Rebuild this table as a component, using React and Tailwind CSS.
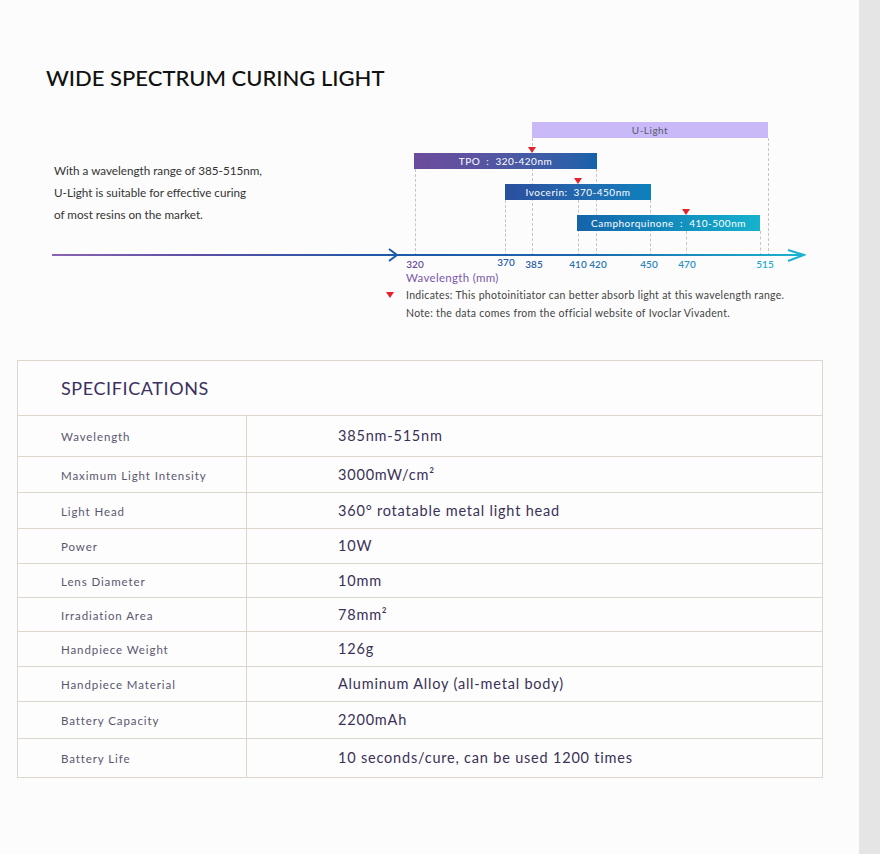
import React from "react";

const bars = [
  { label: "TPO  :  320-420nm", left: 414, top: 53, width: 183, cls: "bg-gradient-to-r from-[#6d4b9c] to-[#1262aa]" },
  { label: "Ivocerin:  370-450nm", left: 505, top: 84, width: 146, cls: "bg-gradient-to-r from-[#2a4f9e] to-[#0d80bd]" },
  { label: "Camphorquinone  :  410-500nm", left: 577, top: 115, width: 183, cls: "bg-gradient-to-r from-[#1563aa] to-[#16b2cd]" },
];

const markers = [532, 578, 686];
const markerTops = [47, 78, 109];

const dashes = [
  { x: 415, top: 69 },
  { x: 505, top: 100 },
  { x: 532, top: 38 },
  { x: 578, top: 100 },
  { x: 596, top: 69 },
  { x: 650, top: 100 },
  { x: 686, top: 131 },
  { x: 760, top: 131 },
  { x: 768, top: 38 },
];

const ticks = [
  { v: "320", x: 415, c: "#6a4c9c", top: 159 },
  { v: "370", x: 506, c: "#2d5da8", top: 157 },
  { v: "385", x: 534, c: "#2b5ea8", top: 159 },
  { v: "410", x: 578, c: "#2a6fb0", top: 159 },
  { v: "420", x: 598, c: "#2a74b3", top: 159 },
  { v: "450", x: 649, c: "#2a84bf", top: 159 },
  { v: "470", x: 687, c: "#2a90c4", top: 159 },
  { v: "515", x: 765, c: "#21a9cc", top: 159 },
];

const specs = [
  ["Wavelength", "385nm-515nm", 41],
  ["Maximum Light Intensity", "3000mW/cm²", 36],
  ["Light Head", "360° rotatable metal light head", 36],
  ["Power", "10W", 35],
  ["Lens Diameter", "10mm", 34],
  ["Irradiation Area", "78mm²", 34],
  ["Handpiece Weight", "126g", 35],
  ["Handpiece Material", "Aluminum Alloy (all-metal body)", 35],
  ["Battery Capacity", "2200mAh", 37],
  ["Battery Life", "10 seconds/cure, can be used 1200 times", 38],
];

function Triangle({ className = "", style }) {
  return (
    <div
      className={`w-0 h-0 border-l-[4px] border-r-[4px] border-t-[6px] border-l-transparent border-r-transparent border-t-[#e5212b] ${className}`}
      style={style}
    />
  );
}

export default function App() {
  return (
    <div className="flex min-h-screen bg-[#fcfcfc] font-['Lato',sans-serif]">
      <div className="w-[859px] pb-[77px]">
        {/* Title */}
        <h1 className="pt-[64px] pl-[46px] text-[22px] leading-[28px] font-medium text-[#111]">
          WIDE SPECTRUM CURING LIGHT
        </h1>

        {/* Spectrum chart */}
        <div className="relative mt-[8px] h-[230px]">
          <p className="pt-[59px] pl-[54px] text-[11.7px] leading-[22px] text-[#333]">
            With a wavelength range of 385-515nm,
            <br />
            U-Light is suitable for effective curing
            <br />
            of most resins on the market.
          </p>

          {dashes.map((d) => (
            <div
              key={d.x}
              className="absolute w-0 border-l border-dashed border-[#c6c6c6]"
              style={{ left: d.x, top: d.top, height: 156 - d.top }}
            />
          ))}

          <div className="absolute left-[532px] top-[22px] w-[236px] h-[16px] bg-[#c9b9f9] flex items-center justify-center text-[10px] text-[#5a5a6a] tracking-[0.5px]">
            U-Light
          </div>

          {bars.map((b) => (
            <div
              key={b.label}
              className={`absolute h-[16px] flex items-center justify-center text-[10px] text-white whitespace-pre tracking-[0.5px] ${b.cls}`}
              style={{ left: b.left, top: b.top, width: b.width }}
            >
              {b.label}
            </div>
          ))}

          {markers.map((x, i) => (
            <Triangle key={x} className="absolute" style={{ left: x - 4, top: markerTops[i] }} />
          ))}

          {/* axis */}
          <div className="absolute left-[52px] top-[154px] w-[752px] h-[2px] bg-[linear-gradient(to_right,#8a64b2,#5a4fa6_20%,#1c5aa8_45%,#1b64ac_70%,#1bb4d0)]" />
          <svg className="absolute left-[387px] top-[148px]" width="12" height="14" viewBox="0 0 12 14">
            <polyline points="2,1 10,7 2,13" fill="none" stroke="#1b5aa8" strokeWidth="2" />
          </svg>
          <svg className="absolute left-[786px] top-[149px]" width="20" height="14" viewBox="0 0 20 14">
            <polyline points="2,1 18,6 2,12" fill="none" stroke="#1db3d0" strokeWidth="2" />
          </svg>

          {ticks.map((t) => (
            <div
              key={t.v}
              className="absolute w-[30px] -ml-[15px] text-center text-[10px] leading-[10px] font-semibold"
              style={{ left: t.x, top: t.top, color: t.c }}
            >
              {t.v}
            </div>
          ))}

          <div className="absolute left-[406px] top-[170px] text-[11.5px] leading-[16px] text-[#7b58aa] tracking-[0.3px]">
            Wavelength (mm)
          </div>
          <Triangle className="absolute left-[386px] top-[192px]" />
          <div className="absolute left-[406px] top-[188px] text-[10.5px] leading-[14px] text-[#444] tracking-[0.3px]">
            Indicates: This photoinitiator can better absorb light at this wavelength range.
          </div>
          <div className="absolute left-[406px] top-[206px] text-[10.5px] leading-[14px] text-[#444] tracking-[0.3px]">
            Note: the data comes from the official website of Ivoclar Vivadent.
          </div>
        </div>

        {/* Specifications table */}
        <div className="ml-[17px] mt-[30px] w-[806px] border border-[#ddd6cc] bg-[#fdfdfd]">
          <div className="h-[55px] border-b border-[#ddd6cc] flex items-center pl-[43px] text-[18px] text-[#3b2f5f] tracking-[0.6px]">
            SPECIFICATIONS
          </div>
          {specs.map(([label, value, h], i) => (
            <div
              key={label}
              className={`flex ${i < specs.length - 1 ? "border-b border-[#ddd6cc]" : ""}`}
              style={{ height: h }}
            >
              <div className="w-[229px] border-r border-[#ddd6cc] flex items-center pl-[43px] pt-[2px] text-[11.5px] text-[#5b5670] tracking-[0.9px]">
                {label}
              </div>
              <div className="flex-1 flex items-center pl-[91px] text-[14.5px] text-[#3a3158] tracking-[0.8px]">
                {value}
              </div>
            </div>
          ))}
        </div>
      </div>
      <div className="w-[21px] bg-[#e5e5e5]" />
    </div>
  );
}
